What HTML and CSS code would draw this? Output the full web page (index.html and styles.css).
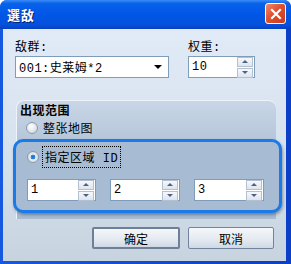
FILE: index.html
```html
<!DOCTYPE html>
<html lang="zh-CN">
<head>
  <meta charset="UTF-8">
  <title>選敌</title>
  <link rel="stylesheet" href="styles.css">
</head>
<body>

<div class="window">
  <div class="titlebar">
    <span class="title">選敌</span>
    <button type="button" class="close-btn">
      <svg viewBox="0 0 12 12" width="12" height="12">
        <path d="M2 2L10 10M10 2L2 10" stroke="white" stroke-width="2.2" stroke-linecap="square"/>
      </svg>
    </button>
  </div>

  <div class="client">
    <div class="top-row">
      <div class="field enemy">
        <label>敌群:</label>
        <div class="combo">
          <span>001:史莱姆*2</span>
          <span class="combo-arrow"></span>
        </div>
      </div>
      <div class="field weight">
        <label>权重:</label>
        <div class="spinner">
          <span class="spin-value">10</span>
          <div class="spin-btns">
            <span class="spin-up"></span>
            <span class="spin-down"></span>
          </div>
        </div>
      </div>
    </div>

    <div class="group">
      <div class="group-title">出现范围</div>
      <div class="radio-row">
        <span class="radio"></span>
        <span>整张地图</span>
      </div>

      <div class="highlight">
        <div class="radio-row">
          <span class="radio checked"></span>
          <span class="focus-text">指定区域 ID</span>
        </div>
        <div class="id-row">
          <div class="spinner">
            <span class="spin-value">1</span>
            <div class="spin-btns">
              <span class="spin-up"></span>
              <span class="spin-down"></span>
            </div>
          </div>
          <div class="spinner">
            <span class="spin-value">2</span>
            <div class="spin-btns">
              <span class="spin-up"></span>
              <span class="spin-down"></span>
            </div>
          </div>
          <div class="spinner">
            <span class="spin-value">3</span>
            <div class="spin-btns">
              <span class="spin-up"></span>
              <span class="spin-down"></span>
            </div>
          </div>
        </div>
      </div>
    </div>

    <div class="buttons">
      <button type="button" class="btn default">确定</button>
      <button type="button" class="btn">取消</button>
    </div>
  </div>
</div>

</body>
</html>
```

FILE: styles.css
```css
body {
  margin: 0;
  font-family: "Liberation Mono", "Noto Sans CJK SC", monospace;
  font-size: 12px;
  letter-spacing: 0.5px;
  color: #000;
  background: #fff;
}

.window {
  width: 291px;
  height: 264px;
  display: flex;
  flex-direction: column;
  background: linear-gradient(to right, #1658e0, #0b3fc8);
  border-radius: 7px 7px 0 0;
  box-sizing: border-box;
}

.titlebar {
  height: 29px;
  display: flex;
  align-items: center;
  justify-content: space-between;
  padding: 0 5px 0 7px;
  background: linear-gradient(to bottom, #3c8cf6 0%, #0862ea 12%, #0056e6 50%, #0551dc 85%, #0a3fc0 100%);
  border-radius: 7px 7px 0 0;
  box-sizing: border-box;
}

.title {
  font-family: "Noto Sans CJK SC", sans-serif;
  color: #fff;
  font-weight: bold;
  font-size: 13px;
  letter-spacing: 1px;
  text-shadow: 1px 1px 0 #0a1e6a;
  margin-top: -1px;
}

.close-btn {
  width: 21px;
  height: 21px;
  padding: 0;
  margin-top: -2px;
  border: 1px solid #fff;
  border-radius: 3px;
  background: linear-gradient(135deg, #f08a6c, #e0502e 45%, #c63c1c);
  display: flex;
  justify-content: center;
  align-items: center;
}

.client {
  flex: 1;
  margin: 0 5px 3px 3px;
  padding: 12px 12px 0 12px;
  background: linear-gradient(to bottom, #e1ebf7, #d6e1ee 55%, #c7d3df);
  display: flex;
  flex-direction: column;
}

.top-row {
  display: flex;
  gap: 19px;
}

.field label {
  display: block;
  height: 15px;
  line-height: 14px;
}

.enemy {
  width: 154px;
}

.weight {
  width: 67px;
}

.combo {
  height: 22px;
  box-sizing: border-box;
  border: 1px solid #7f9db9;
  background: #fff;
  display: flex;
  align-items: center;
  justify-content: space-between;
  padding: 0 6px 0 3px;
}

.combo-arrow {
  width: 0;
  height: 0;
  border-left: 4px solid transparent;
  border-right: 4px solid transparent;
  border-top: 4px solid #000;
}

.spinner {
  height: 22px;
  box-sizing: border-box;
  border: 1px solid #7f9db9;
  background: #fff;
  display: flex;
  align-items: center;
  justify-content: space-between;
  padding: 0 1px 0 3px;
}

.spin-btns {
  display: flex;
  flex-direction: column;
  gap: 1px;
  width: 16px;
}

.spin-up,
.spin-down {
  height: 8px;
  border: 1px solid #b3c0d0;
  background: linear-gradient(to bottom, #f6f8fb, #dde5ef);
  display: flex;
  justify-content: center;
  align-items: center;
}

.spin-up::after,
.spin-down::after {
  content: "";
  width: 0;
  height: 0;
  border-left: 3px solid transparent;
  border-right: 3px solid transparent;
}

.spin-up::after {
  border-bottom: 3px solid #4d6185;
}

.spin-down::after {
  border-top: 3px solid #4d6185;
}

.group {
  margin: 22px -2px 0 1px;
  padding: 2px 0 0 3px;
  border-radius: 8px 8px 0 0;
  border-top: 1px solid #eef3f9;
  border-left: 1px solid #eef3f9;
  background: linear-gradient(to bottom, #c8d6e6, #b2c3d7 40%, #a9bbd1);
  height: 116px;
}

.group-title {
  font-family: "Noto Sans CJK SC", sans-serif;
  font-weight: bold;
  line-height: 14px;
}

.radio-row {
  display: flex;
  align-items: center;
  gap: 5px;
  margin: 4px 0 0 6px;
  height: 14px;
}

.radio {
  width: 10px;
  height: 10px;
  border-radius: 50%;
  border: 1px solid #8c9bab;
  background: radial-gradient(circle at 40% 35%, #ffffff, #dfe3e8 60%, #c4cad2);
  box-sizing: content-box;
}

.radio.checked {
  background: radial-gradient(circle at 50% 50%, #1f6bc9 0, #3a8ae0 30%, #e9eef4 38%, #cfd6de);
}

.focus-text {
  outline: 1px dotted #000;
  outline-offset: 1px;
  padding: 0 1px;
}

.highlight {
  margin: 4px -6px 0 -7px;
  height: 74px;
  box-sizing: border-box;
  border: 3px solid #1a7ae8;
  border-radius: 10px;
  background: #a7bbd2;
  box-shadow: 1px 2px 3px rgba(40, 60, 90, 0.45);
  padding: 4px 0 0 8px;
}

.highlight .radio-row {
  margin: 4px 0 0 3px;
}

.id-row {
  display: flex;
  gap: 14px;
  margin: 15px 0 0 3px;
}

.id-row .spinner {
  width: 70px;
}

.id-row .spinner:first-child {
  width: 69px;
}

.buttons {
  display: flex;
  justify-content: flex-end;
  gap: 8px;
  margin: auto 0 12px 0;
}

.btn {
  width: 86px;
  height: 22px;
  font-family: "Noto Sans CJK SC", sans-serif;
  font-size: 12px;
  padding: 0;
  border: 1px solid #7084a0;
  border-radius: 2px;
  background: linear-gradient(to bottom, #f4f7fa, #e3e9f0 60%, #cfd8e3);
  color: #000;
}

.btn.default {
  width: 88px;
  border: 2px solid #6e7f98;
}
```
